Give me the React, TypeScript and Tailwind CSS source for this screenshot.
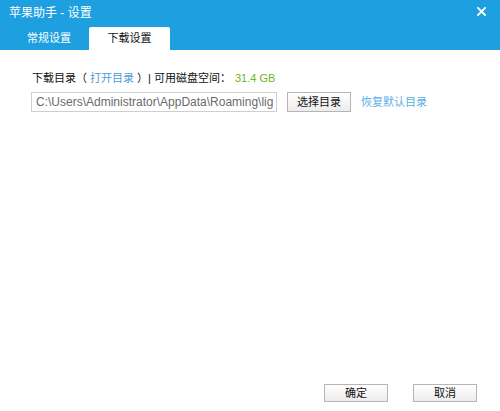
import React from "react";

const font = { fontFamily: '"Microsoft YaHei", "Liberation Sans", "Noto Sans CJK SC", sans-serif' };

function Btn({ children, w }: { children: React.ReactNode; w: string }) {
  return (
    <div
      className={`${w} flex items-center justify-center border border-[#b5b5b5] bg-gradient-to-b from-[#ffffff] to-[#ececec] text-[11px] text-[#111] leading-none`}
    >
      {children}
    </div>
  );
}

export default function App() {
  return (
    <div className="w-[500px] h-[411px] flex flex-col bg-white overflow-hidden" style={font}>
      <div className="h-[50px] bg-[#1e9fe0] flex flex-col">
        <div className="h-[27px] flex items-center justify-between pl-[9px] pr-[14px]">
          <span className="text-white text-[12px] leading-none -mt-[1px]">苹果助手 - 设置</span>
          <svg width="9" height="9" viewBox="0 0 9 9" className="-mt-[5px]">
            <path d="M1 1 L8 8 M8 1 L1 8" stroke="white" strokeWidth="1.8" strokeLinecap="square" />
          </svg>
        </div>
        <div className="h-[23px] flex items-end pl-[9px]">
          <div className="w-[80px] h-[23px] flex items-center justify-center text-white text-[11px]">常规设置</div>
          <div className="w-[81px] h-[23px] bg-white rounded-t-[2px] flex items-center justify-center text-[#111] text-[11px]">
            下载设置
          </div>
        </div>
      </div>

      <div className="flex flex-col pl-[31px] pt-[20px] gap-[6px]">
        <div className="h-[16px] flex items-center text-[11px] text-[#111] whitespace-pre">
          <span className="pl-[1px]">下载目录（ </span>
          <span className="text-[#4a9ed8]">打开目录</span>
          <span> ）|</span>
          <span className="ml-[3px]">可用磁盘空间：</span>
          <span className="text-[#6fb620] ml-[4px]">31.4 GB</span>
        </div>
        <div className="flex items-center h-[20px]">
          <div className="w-[246px] h-[20px] border border-[#cfcfcf] bg-white flex items-center pl-[4px] overflow-hidden whitespace-nowrap text-[12px] text-[#6b6b6b]">
            <span className="block overflow-hidden">C:\Users\Administrator\AppData\Roaming\lig</span>
          </div>
          <div className="ml-[10px] flex h-[20px]">
            <Btn w="w-[64px]">选择目录</Btn>
          </div>
          <span className="ml-[10px] text-[11px] text-[#5aaee6]">恢复默认目录</span>
        </div>
      </div>

      <div className="flex-1" />

      <div className="flex justify-end gap-[25px] pr-[23px] pb-[9px]">
        <div className="flex h-[18px]">
          <Btn w="w-[64px]">确定</Btn>
        </div>
        <div className="flex h-[18px]">
          <Btn w="w-[64px]">取消</Btn>
        </div>
      </div>
    </div>
  );
}
